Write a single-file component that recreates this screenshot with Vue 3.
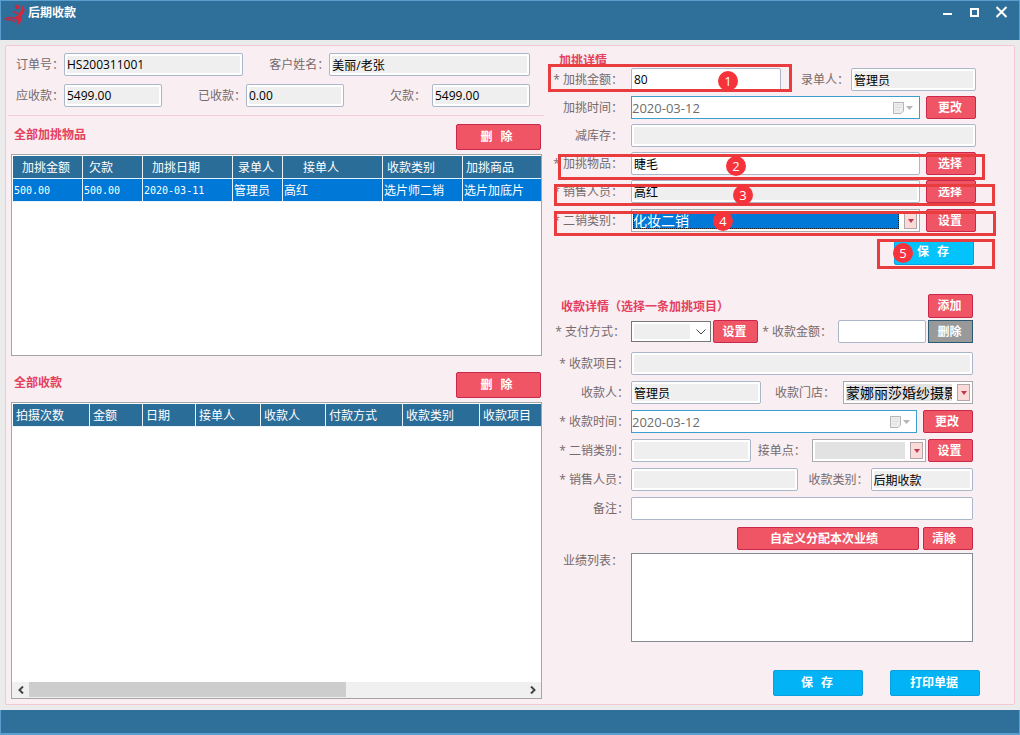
<script setup>
import { ref } from 'vue'

const extraColumns = [
  { title: '加挑金额', width: 70, pad: 9 },
  { title: '欠款', width: 60, pad: 6 },
  { title: '加挑日期', width: 90, pad: 9 },
  { title: '录单人', width: 50, pad: 5 },
  { title: '接单人', width: 100, pad: 20 },
  { title: '收款类别', width: 80, pad: 4 },
  { title: '加挑商品', width: 0, pad: 3 },
]
const extraRows = [
  ['500.00', '500.00', '2020-03-11', '管理员', '高红', '选片师二销', '选片加底片'],
]
const payColumns = [
  { title: '拍摄次数', width: 77, pad: 3 },
  { title: '金额', width: 53, pad: 3 },
  { title: '日期', width: 53, pad: 3 },
  { title: '接单人', width: 65, pad: 3 },
  { title: '收款人', width: 65, pad: 3 },
  { title: '付款方式', width: 77, pad: 3 },
  { title: '收款类别', width: 77, pad: 3 },
  { title: '收款项目', width: 0, pad: 3 },
]
const isNumeric = (text) => /^[\d.-]+$/.test(text)
const colStyle = (c) => (c.width ? { width: c.width + 'px' } : {})

const amount = ref('80')
const goods = ref('睫毛')
const payAmount = ref('')
const remark = ref('')
const results = ref('')
</script>

<template>
  <div class="window">
    <header class="titlebar">
      <svg class="logo" viewBox="0 0 22 23" aria-hidden="true">
        <circle cx="13" cy="3" r="2.2" fill="#c8283c" />
        <path d="M17 0.5 C22 4 21.5 9 17 12 C19.5 14 18 18 12.500 22 C14.500 18 14.500 15.500 10 13.500 C14.500 11.500 18 8 17 0.5Z" fill="#d02a3c" />
        <path d="M9 7 L14.500 10 M0.500 15 C5 12.500 8 13.500 13 15.500 M1 16 C5 14.500 8 16 12 18" fill="none" stroke="#b52f4a" stroke-width="1.5" />
      </svg>
      <h1>后期收款</h1>
      <div class="winbtns">
        <button type="button" aria-label="最小化">
          <svg viewBox="0 0 12 12"><path d="M1 8H10" stroke="#fff" stroke-width="2" /></svg>
        </button>
        <button type="button" aria-label="最大化">
          <svg viewBox="0 0 12 12"><rect x="2" y="3" width="7" height="7" fill="none" stroke="#fff" stroke-width="2" /></svg>
        </button>
        <button type="button" aria-label="关闭">
          <svg viewBox="0 0 12 12"><path d="M0.5 1L10.5 11M10.5 1L0.5 11" stroke="#fff" stroke-width="2" /></svg>
        </button>
      </div>
    </header>

    <main class="body">
      <div class="panel">
        <section class="left">
          <div class="summary">
            <div class="row">
              <label class="l56" for="orderNo">订单号：</label>
              <input id="orderNo" class="g179" readonly value="HS200311001" />
              <label class="l86" for="customer">客户姓名：</label>
              <input id="customer" class="g201" readonly value="美丽/老张" />
            </div>
            <div class="row">
              <label class="l56" for="due">应收款：</label>
              <input id="due" readonly value="5499.00" />
              <label class="l84" for="paid">已收款：</label>
              <input id="paid" readonly value="0.00" />
              <label class="l88 p6" for="owed">欠款：</label>
              <input id="owed" readonly value="5499.00" />
            </div>
          </div>

          <div class="lists">
            <div class="listhead">
              <h2>全部加挑物品</h2>
              <button type="button" class="btn wide"><span>删</span><span>除</span></button>
            </div>
            <div class="grid first">
              <table>
                <colgroup><col v-for="c in extraColumns" :key="c.title" :style="colStyle(c)" /></colgroup>
                <thead>
                  <tr><th v-for="c in extraColumns" :key="c.title" :style="{ paddingLeft: c.pad + 'px' }">{{ c.title }}</th></tr>
                </thead>
                <tbody>
                  <tr v-for="(r, i) in extraRows" :key="i">
                    <td v-for="(v, j) in r" :key="j" :class="{ num: isNumeric(v) }">{{ v }}</td>
                  </tr>
                </tbody>
              </table>
            </div>
            <div class="listhead second">
              <h2>全部收款</h2>
              <button type="button" class="btn wide"><span>删</span><span>除</span></button>
            </div>
            <div class="grid last">
              <table>
                <colgroup><col v-for="c in payColumns" :key="c.title" :style="colStyle(c)" /></colgroup>
                <thead>
                  <tr><th v-for="c in payColumns" :key="c.title" :style="{ paddingLeft: c.pad + 'px' }">{{ c.title }}</th></tr>
                </thead>
              </table>
              <div class="scroll">
                <button type="button" aria-label="向左"><svg viewBox="0 0 8 8"><path d="M6 0.5L2.5 4L6 7.5" fill="none" stroke="#444" stroke-width="2" /></svg></button>
                <div class="track"><div class="thumb"></div></div>
                <button type="button" aria-label="向右"><svg viewBox="0 0 8 8"><path d="M2 0.5L5.5 4L2 7.5" fill="none" stroke="#444" stroke-width="2" /></svg></button>
              </div>
            </div>
          </div>
        </section>

        <section class="right">
          <form class="form extra" @submit.prevent>
            <h2>加挑详情</h2>
            <div class="row">
              <label class="l87" for="amount">* 加挑金额：</label>
              <input id="amount" v-model="amount" class="edit g150" />
              <label class="l70 p2" for="clerk">录单人：</label>
              <input id="clerk" class="g124" readonly value="管理员" />
            </div>
            <div class="row">
              <label class="l87" for="extraDate">加挑时间：</label>
              <div class="date">
                <input id="extraDate" readonly value="2020-03-12" />
                <svg viewBox="0 0 22 14" aria-hidden="true"><path d="M1.5 1.5H11.5V10L9 12.5H1.5Z" fill="#eee" stroke="#b5b5b5" /><path d="M3 4H10M3 6.5H10M3 9H8" stroke="#ddd" /><path d="M14 5H21L17.5 9Z" fill="#b5b5b5" /></svg>
              </div>
              <button type="button" class="btn w50 s6">更改</button>
            </div>
            <div class="row">
              <label class="l87" for="stock">减库存：</label>
              <input id="stock" readonly />
            </div>
            <div class="row">
              <label class="l87" for="goods">* 加挑物品：</label>
              <input id="goods" v-model="goods" class="edit" />
              <button type="button" class="btn w50 s6">选择</button>
            </div>
            <div class="row">
              <label class="l87" for="seller">* 销售人员：</label>
              <input id="seller" readonly value="高红" />
              <button type="button" class="btn w50 s6">选择</button>
            </div>
            <div class="row kind">
              <label class="l87" for="kind">* 二销类别：</label>
              <div class="combo active">
                <select id="kind"><option>化妆二销</option></select>
                <span class="drop"><svg viewBox="0 0 6 4"><path d="M0 0H6L3 4Z" fill="#c0394b" /></svg></span>
              </div>
              <button type="button" class="btn w50 s6">设置</button>
            </div>
            <div class="saverow">
              <button type="button" class="btn blue bright"><span>保</span><span>存</span></button>
            </div>

            <div class="mark m1"></div>
            <div class="mark m2"></div>
            <div class="mark m3"></div>
            <div class="mark m4"></div>
            <div class="mark m5"></div>
            <span class="dot d1">1</span>
            <span class="dot d2">2</span>
            <span class="dot d3">3</span>
            <span class="dot d4">4</span>
            <span class="dot d5">5</span>
          </form>

          <form class="form pay" @submit.prevent>
            <div class="payhead">
              <h2>收款详情（选择一条加挑项目）</h2>
              <button type="button" class="btn w45">添加</button>
            </div>
            <div class="row method">
              <label class="l87 p6" for="method">* 支付方式：</label>
              <div class="plain">
                <select id="method"><option></option></select>
                <svg viewBox="0 0 10 6" aria-hidden="true"><path d="M0.5 0.5L5 5L9.5 0.5" fill="none" stroke="#444" /></svg>
              </div>
              <button type="button" class="btn w45 s2">设置</button>
              <label class="l80 p6" for="payAmount">* 收款金额：</label>
              <input id="payAmount" v-model="payAmount" class="edit" />
              <button type="button" class="btn gray w45 s2">删除</button>
            </div>
            <div class="row">
              <label class="l87 p2" for="item">* 收款项目：</label>
              <input id="item" readonly />
            </div>
            <div class="row">
              <label class="l87 p2" for="payee">收款人：</label>
              <input id="payee" readonly value="管理员" />
              <label class="l82 p8" for="shop">收款门店：</label>
              <div class="combo">
                <select id="shop"><option>蒙娜丽莎婚纱摄影</option></select>
                <span class="drop"><svg viewBox="0 0 6 4"><path d="M0 0H6L3 4Z" fill="#c0394b" /></svg></span>
              </div>
            </div>
            <div class="row">
              <label class="l87 p2" for="payDate">* 收款时间：</label>
              <div class="date">
                <input id="payDate" readonly value="2020-03-12" />
                <svg viewBox="0 0 22 14" aria-hidden="true"><path d="M1.5 1.5H11.5V10L9 12.5H1.5Z" fill="#eee" stroke="#b5b5b5" /><path d="M3 4H10M3 6.5H10M3 9H8" stroke="#ddd" /><path d="M14 5H21L17.5 9Z" fill="#b5b5b5" /></svg>
              </div>
              <button type="button" class="btn w50 s6">更改</button>
            </div>
            <div class="row">
              <label class="l87 p2" for="payKind">* 二销类别：</label>
              <input id="payKind" class="g120" readonly />
              <label class="l61 p6" for="point">接单点：</label>
              <div class="combo g114">
                <select id="point"><option></option></select>
                <span class="drop"><svg viewBox="0 0 6 4"><path d="M0 0H6L3 4Z" fill="#c0394b" /></svg></span>
              </div>
              <button type="button" class="btn w45 s2">设置</button>
            </div>
            <div class="row">
              <label class="l87 p2" for="paySeller">* 销售人员：</label>
              <input id="paySeller" class="g168" readonly />
              <label class="l73 p2" for="payType">收款类别：</label>
              <input id="payType" class="g101" readonly value="后期收款" />
            </div>
            <div class="row">
              <label class="l87 p2" for="remark">备注：</label>
              <input id="remark" v-model="remark" class="edit" />
            </div>
            <div class="assign">
              <button type="button" class="btn custom">自定义分配本次业绩</button>
              <button type="button" class="btn w50">清除</button>
            </div>
            <div class="row top">
              <label class="l87" for="results">业绩列表：</label>
              <textarea id="results" v-model="results"></textarea>
            </div>
          </form>
          <div class="actions">
            <button type="button" class="btn blue"><span>保</span><span>存</span></button>
            <button type="button" class="btn blue">打印单据</button>
          </div>
        </section>
      </div>
    </main>
    <footer class="statusbar"></footer>
  </div>
</template>

<style>
body {
  margin: 0;
}
</style>

<style scoped>
* {
  box-sizing: border-box;
}
.window {
  min-height: 100vh;
  display: flex;
  flex-direction: column;
  background: #ebebeb;
  font: 12px/16px "Open Sans", "Noto Sans CJK SC", sans-serif;
  color: #756a6d;
}
input, select, button, textarea {
  font: inherit;
  margin: 0;
  border-radius: 0;
}
h1, h2 {
  margin: 0;
  font-size: 12px;
  line-height: 16px;
  font-weight: 700;
}
h2 {
  color: #e5405f;
}
.titlebar {
  height: 40px;
  display: flex;
  align-items: flex-start;
  background: #2f709b;
  border: 1px solid #5a9fd0;
  border-bottom: 0;
  padding: 3px 11px 0 3px;
}
.logo {
  width: 22px;
  height: 23px;
}
.titlebar h1 {
  color: #fff;
  flex: 1;
  padding-left: 2px;
  line-height: 18px;
}
.winbtns {
  display: flex;
  gap: 15px;
  padding-top: 2px;
}
.winbtns button {
  width: 12px;
  height: 12px;
  padding: 0;
  border: 0;
  background: none;
}
.winbtns svg {
  display: block;
}
.statusbar {
  height: 25px;
  background: #2f709b;
  border: 1px solid #5a9fd0;
  border-width: 0 1px 2px;
}
.body {
  flex: 1;
  display: flex;
  padding: 5px;
}
.panel {
  flex: 1;
  display: grid;
  grid-template-columns: minmax(0, 538fr) minmax(0, 470fr);
  background: #f9eef1;
  border: 1px solid #f4c9d4;
  border-radius: 2px;
}
.left {
  display: flex;
  flex-direction: column;
  padding: 7px 0 5px;
}
.summary {
  display: flex;
  flex-direction: column;
  gap: 8px;
  margin-left: 2px;
  padding: 0 14px 8px 0;
  border-bottom: 1px solid #f3cdd5;
}
.row {
  display: flex;
  align-items: center;
  min-height: 23px;
}
.row.top {
  align-items: flex-start;
}
label {
  flex: none;
  text-align: right;
  white-space: nowrap;
}
.l56 { width: 56px; }
.l61 { width: 61px; }
.l70 { width: 70px; }
.l73 { width: 73px; }
.l80 { width: 80px; }
.l82 { width: 82px; }
.l84 { width: 84px; }
.l86 { width: 86px; }
.l87 { width: 87px; padding-right: 8px; }
.l88 { width: 88px; }
.p2 { padding-right: 2px; }
.p6 { padding-right: 6px; }
.p8 { padding-right: 8px; }
input {
  flex: 1 1 0;
  min-width: 0;
  height: 23px;
  padding: 2px;
  border: 1px solid #a9b7c9;
  border-radius: 2px;
  background: linear-gradient(#efefef, #efefef) content-box, #fff;
  color: #000;
  outline: 0;
}
input.edit {
  background: #fff;
}
.g101 { flex-grow: 101; }
.g114 { flex-grow: 114; }
.g120 { flex-grow: 120; }
.g124 { flex-grow: 124; }
.g150 { flex-grow: 150; }
.g168 { flex-grow: 168; }
.g179 { flex-grow: 179; }
.g201 { flex-grow: 201; }
.btn {
  flex: none;
  display: flex;
  align-items: center;
  justify-content: center;
  gap: 8px;
  height: 23px;
  padding: 0 2px 0 0;
  border: 1px solid #c9284b;
  border-radius: 2px;
  background: #ef5564;
  color: #fff;
  font-weight: 700;
}
.btn.wide {
  width: 85px;
  height: 26px;
  padding-right: 4px;
}
.w45 { width: 45px; }
.w50 { width: 50px; }
.s2 { margin-left: 2px; }
.s6 { margin-left: 6px; }
.btn.gray {
  background: #999;
  border-color: #2b5872;
  border-radius: 0;
}
.btn.blue {
  width: 90px;
  height: 26px;
  background: #02b4f6;
  border-color: #0a9fe0;
}
.btn.bright {
  width: 80px;
  background: #02c3fb;
}
.lists {
  flex: 1;
  display: flex;
  flex-direction: column;
  padding: 8px 2px 0 5px;
}
.listhead {
  display: flex;
  justify-content: space-between;
  padding: 0 1px 4px 3px;
}
.listhead.second {
  padding-top: 16px;
}
.listhead h2 {
  line-height: 22px;
}
.grid {
  flex: 202 1 0;
  display: flex;
  flex-direction: column;
  border: 1px solid #a5a5a5;
  background: #fff;
}
.grid.last {
  flex-grow: 297;
}
table {
  width: 100%;
  table-layout: fixed;
  border-collapse: separate;
  border-spacing: 0;
  padding: 1px 0 0 1px;
}
th, td {
  height: 23px;
  padding: 1px 0 0 1px;
  text-align: left;
  font-weight: 400;
  line-height: 16px;
  white-space: nowrap;
  overflow: hidden;
  color: #fff;
  border-right: 1px solid #e8f2f8;
  border-bottom: 1px solid #e8f2f8;
}
th {
  background: #2a6d99;
}
td {
  background: #0078d7;
}
th:last-child, td:last-child {
  border-right: 0;
}
td.num {
  font-family: "DejaVu Sans Mono", monospace;
  font-size: 10px;
}
.scroll {
  margin-top: auto;
  height: 16px;
  display: flex;
  background: #f0f0f0;
}
.scroll button {
  width: 17px;
  padding: 0;
  border: 0;
  background: none;
  display: flex;
  align-items: center;
  justify-content: center;
}
.scroll svg {
  width: 8px;
  height: 8px;
}
.track {
  flex: 1;
}
.thumb {
  width: 64%;
  height: 15px;
  background: #cdcdcd;
}
.right {
  display: flex;
  flex-direction: column;
}
.form {
  display: flex;
  flex-direction: column;
}
.extra {
  position: relative;
  gap: 5px;
  padding: 6px 38px 0 0;
}
.extra h2 {
  padding-left: 15px;
  margin-bottom: -5px;
  line-height: 17px;
}
.extra h2 + .row {
  margin-top: -1px;
}
.date {
  flex: 1;
  display: flex;
  align-items: center;
  height: 23px;
  border: 1px solid #3d9fcd;
  background: #fff;
  padding-right: 5px;
}
.date input {
  height: 21px;
  border: 0;
  padding: 0;
  background: none;
  color: #6d6d6d;
  font-size: 13px;
}
.date svg {
  width: 22px;
  height: 14px;
}
.combo {
  flex: 1 1 0;
  min-width: 0;
  display: flex;
  align-items: center;
  height: 23px;
  gap: 5px;
  padding: 0 2px;
  border: 1px solid #aaa;
  background: #fff;
}
.combo.g114 {
  flex-grow: 114;
}
.combo select {
  flex: 1;
  min-width: 0;
  height: 17px;
  appearance: none;
  border: 0;
  padding: 0;
  background: #e2e2e2;
  color: #000;
  font-size: 14px;
  line-height: 17px;
  text-overflow: clip;
  outline: 0;
}
.combo.active {
  padding-left: 1px;
}
.combo.active select {
  background: #0078d7;
  color: #fff;
  outline: 1px dotted #222;
  outline-offset: -1px;
}
.drop {
  flex: none;
  width: 13px;
  height: 17px;
  display: flex;
  align-items: center;
  justify-content: center;
  border: 1px solid #b5a5a8;
  background: #fbdada;
}
.drop svg {
  width: 6px;
  height: 4px;
}
.kind {
  margin-top: 1px;
}
.saverow {
  display: flex;
  justify-content: flex-end;
  padding: 2px 2px 0 0;
}
.pay {
  margin-top: 29px;
  padding-right: 41px;
  gap: 6px;
}
.payhead {
  display: flex;
  justify-content: space-between;
  align-items: center;
  padding-left: 17px;
  margin-bottom: -4px;
}
.payhead h2 {
  line-height: 18px;
  padding-top: 2px;
}
.payhead .btn {
  height: 24px;
}
.method {
  margin-bottom: 3px;
}
.plain {
  flex: none;
  width: 80px;
  height: 21px;
  display: flex;
  align-items: center;
  gap: 6px;
  padding: 2px 4px 2px 2px;
  border: 1px solid #777;
  background: #fff;
}
.plain select {
  flex: 1;
  min-width: 0;
  height: 15px;
  appearance: none;
  border: 0;
  background: #efefef;
}
.plain svg {
  width: 10px;
  height: 6px;
}
.assign {
  display: flex;
  justify-content: flex-end;
  gap: 4px;
  margin: 1px 0 -3px;
}
.custom {
  width: 182px;
}
.assign .btn {
  padding-right: 8px;
}
textarea {
  flex: 1;
  min-width: 0;
  height: 89px;
  border: 1px solid #858b94;
  background: #fff;
  resize: none;
  outline: 0;
}
.actions {
  display: flex;
  justify-content: flex-end;
  gap: 27px;
  padding: 28px 34px 7px 0;
}
.mark {
  position: absolute;
  border: 3px solid #e83c3e;
  pointer-events: none;
}
.m1 { left: 4px; top: 18px; width: 244px; height: 28px; }
.m2 { left: 14px; right: 29px; top: 108px; height: 26px; }
.m3 { left: 10px; right: 19px; top: 138px; height: 22px; }
.m4 { left: 10px; right: 18px; top: 165px; height: 25px; }
.m5 { width: 118px; right: 19px; top: 193px; height: 30px; }
.dot {
  position: absolute;
  width: 20px;
  height: 20px;
  border-radius: 50%;
  background: #f6333a;
  color: #fff;
  font-size: 13px;
  line-height: 20px;
  text-align: center;
}
.d1 { left: 174px; top: 25px; }
.d2 { left: 182px; top: 110px; }
.d3 { left: 189px; top: 139px; }
.d4 { left: 169px; top: 165px; }
.d5 { right: 101px; top: 197px; }
</style>
